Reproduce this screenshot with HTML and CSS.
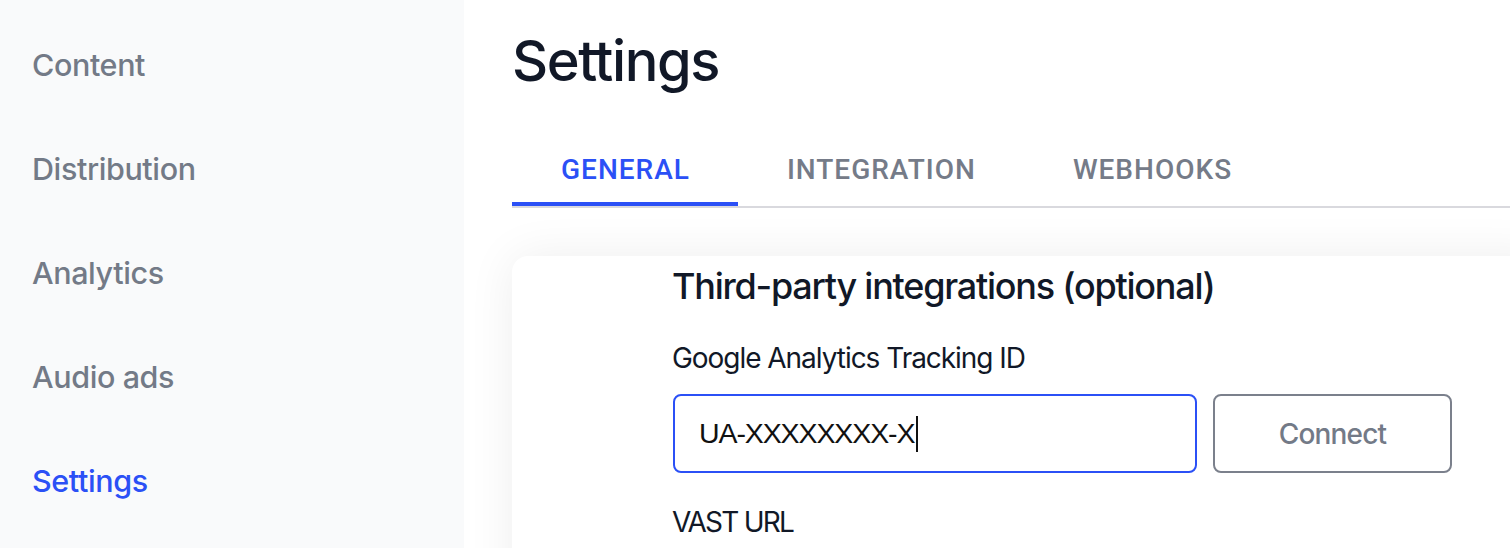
FILE: index.html
```
<!DOCTYPE html>
<html lang="en">
<head>
<meta charset="utf-8">
<title>Settings</title>
<link rel="stylesheet" href="styles.css">
</head>
<body>
<div class="app">
  <nav class="sidebar">
    <a class="nav-item" href="#">Content</a>
    <a class="nav-item" href="#">Distribution</a>
    <a class="nav-item" href="#">Analytics</a>
    <a class="nav-item" href="#">Audio ads</a>
    <a class="nav-item active" href="#">Settings</a>
  </nav>
  <main class="main">
    <h1 class="page-title">Settings</h1>
    <div class="tabs">
      <div class="tab active">GENERAL</div>
      <div class="tab">INTEGRATION</div>
      <div class="tab">WEBHOOKS</div>
    </div>
    <section class="card">
      <h2 class="section-title">Third-party integrations (optional)</h2>
      <label class="field-label">Google Analytics Tracking ID</label>
      <div class="field-row">
        <div class="input"><span class="input-value">UA-XXXXXXXX-X</span><span class="caret"></span></div>
        <button class="btn">Connect</button>
      </div>
      <label class="field-label vast">VAST URL</label>
    </section>
  </main>
</div>
</body>
</html>
```
FILE: styles.css
```
* { box-sizing: border-box; }
html, body { margin: 0; padding: 0; height: 100%; overflow: hidden; }
body {
  font-family: Inter, "Noto Sans", sans-serif;
  background: #ffffff;
  color: #111827;
}
.app { display: flex; height: 548px; overflow: hidden; }
.sidebar {
  width: 464px;
  flex: none;
  background: #f9fafb;
  padding-top: 13.4px;
  display: flex;
  flex-direction: column;
}
.nav-item {
  display: block;
  height: 104px;
  line-height: 104px;
  padding-left: 32px;
  font-size: 30.5px;
  font-weight: 500;
  letter-spacing: -0.4px;
  color: #737a87;
  text-decoration: none;
  flex: none;
}
.nav-item.active { color: #2b50f6; }
.main {
  flex: 1;
  padding-left: 48px;
  min-width: 0;
}
.page-title {
  margin: 33px 0 0 0;
  font-size: 56px;
  line-height: 56px;
  font-weight: 500;
  letter-spacing: -1.4px;
  color: #111827;
}
.tabs {
  margin-top: 49px;
  display: flex;
  border-bottom: 2px solid #d9d9de;
}
.tab {
  padding: 16px 48px 16px 49px;
  font-family: Roboto, Inter, sans-serif;
  font-size: 28px;
  line-height: 32px;
  font-weight: 500;
  letter-spacing: 1px;
  color: #757b88;
  border-bottom: 4px solid transparent;
}
.tab.active { color: #2b50f6; border-bottom-color: #2b50f6; }
.card {
  margin-top: 48px;
  margin-right: -40px;
  background: #ffffff;
  border-radius: 16px;
  box-shadow: 0 0 48px rgba(0, 0, 0, 0.07);
  padding: 8px 0 40px 161px;
  height: 400px;
}
.section-title {
  margin: 0 0 0 -1px;
  font-size: 36px;
  line-height: 44px;
  font-weight: 500;
  letter-spacing: -1.24px;
  color: #111827;
}
.field-label {
  display: block;
  margin-top: 30px;
  margin-left: -1px;
  font-size: 28px;
  line-height: 40px;
  font-weight: 400;
  letter-spacing: -1.04px;
  color: #111827;
}
.field-row {
  display: flex;
  gap: 16px;
  margin-top: 16px;
}
.input {
  width: 524px;
  height: 79px;
  border: 2px solid #2b50f6;
  border-radius: 8px;
  padding-left: 24px;
  display: flex;
  align-items: center;
  font-family: "Liberation Sans", Arial, sans-serif;
  font-size: 28.5px;
  letter-spacing: -1.1px;
  color: #111111;
}
.caret {
  display: inline-block;
  width: 2px;
  height: 36px;
  background: #111111;
  margin-left: 2px;
}
.btn {
  width: 239px;
  height: 79px;
  border: 2px solid #7b808c;
  border-radius: 8px;
  background: #ffffff;
  font-family: Inter, "Noto Sans", sans-serif;
  font-size: 28px;
  font-weight: 500;
  letter-spacing: -0.8px;
  color: #737a87;
}
.field-label.vast { margin-top: 29px; letter-spacing: -1.8px; }
```
